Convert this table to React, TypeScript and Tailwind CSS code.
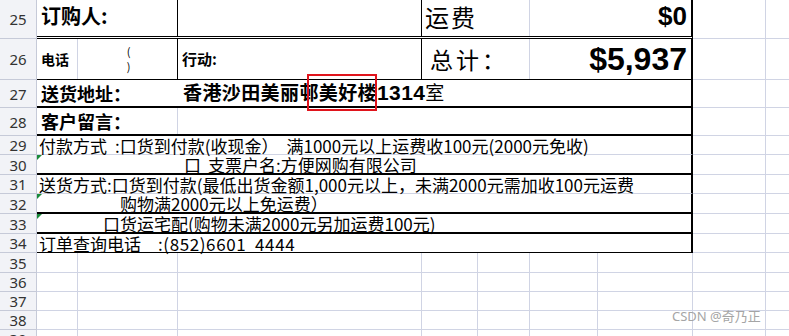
// Excel-style order form fragment (rows 25–39).
const cjk = "font-['Noto_Sans_CJK_SC',sans-serif]"
const arial = "font-['Liberation_Sans',Arial,sans-serif]"

function RowHead({ n, h }: { n: number; h: string }) {
  return (
    <div
      className={`flex w-[37px] shrink-0 items-center justify-center border-r border-b border-[#c6cad8] bg-[#f2f3f7] pt-[1px] text-[15px] text-[#333] font-['Noto_Sans',sans-serif] ${h}`}
    >
      {n}
    </div>
  )
}

function Outside() {
  return (
    <>
      <div className="w-[73px] shrink-0 border-r border-b border-[#d0d4e4]" />
      <div className="flex-1 border-b border-[#d0d4e4]" />
    </>
  )
}

function Tick() {
  return (
    <span className="absolute left-0 top-0 h-0 w-0 border-t-[5px] border-r-[5px] border-t-[#1a8a3a] border-r-transparent" />
  )
}

function EmptyRow({ n, h }: { n: number; h: string }) {
  return (
    <div className={`flex ${h}`}>
      <RowHead n={n} h={h} />
      <div className="w-[41px] shrink-0 border-r border-b border-[#d0d4e4]" />
      <div className="w-[100px] shrink-0 border-r border-b border-[#d0d4e4]" />
      <div className="w-[244px] shrink-0 border-r border-b border-[#d0d4e4]" />
      <div className="w-[56px] shrink-0 border-r border-b border-[#d0d4e4]" />
      <div className="w-[52px] shrink-0 border-r border-b border-[#d0d4e4]" />
      <div className="w-[68px] shrink-0 border-r border-b border-[#d0d4e4]" />
      <div className="w-[95px] shrink-0 border-r border-b border-[#d0d4e4]" />
      <Outside />
    </div>
  )
}

export default function App() {
  return (
    <div className={`relative h-[336px] w-[789px] overflow-hidden bg-white text-black ${cjk}`}>
      {/* 25 */}
      <div className="flex h-[39px]">
        <RowHead n={25} h="h-[39px]" />
        <div className="flex w-[656px] shrink-0 border-r-2 border-b-[3px] border-black [border-bottom-style:double]">
          <div className="flex w-[141px] shrink-0 items-center border-r border-black pl-[4px] pb-[4px] text-[20px] font-bold">
            订购人:
          </div>
          <div className="w-[244px] shrink-0 border-r border-black" />
          <div className="flex w-[108px] shrink-0 items-center border-r border-[#d0d4e4] pl-[3px] pb-[2px] text-[24px] tracking-[2px]">
            运费
          </div>
          <div className={`flex flex-1 items-center justify-end pr-[4px] pb-[3px] text-[26px] font-bold ${arial}`}>
            $0
          </div>
        </div>
        <Outside />
      </div>

      {/* 26 */}
      <div className="flex h-[41px]">
        <RowHead n={26} h="h-[41px]" />
        <div className="flex w-[656px] shrink-0 border-r-2 border-b border-black">
          <div className="flex w-[41px] shrink-0 items-center border-r border-[#d0d4e4] pl-[4px] text-[14px] font-bold">
            电话
          </div>
          <div className="flex w-[100px] shrink-0 flex-col items-center justify-center border-r border-black pl-[2px] text-[11px] leading-[15px]">
            <span>(</span>
            <span>)</span>
          </div>
          <div className="flex w-[244px] shrink-0 items-center border-r border-black pl-[4px] text-[15px] font-bold">
            行动:
          </div>
          <div className="flex w-[108px] shrink-0 items-center border-r border-[#d0d4e4] pl-[8px] text-[23px] tracking-[3px]">
            总计：
          </div>
          <div className={`flex flex-1 items-center justify-end pr-[4px] text-[32px] font-bold ${arial}`}>
            $5,937
          </div>
        </div>
        <Outside />
      </div>

      {/* 27 */}
      <div className="flex h-[28px]">
        <RowHead n={27} h="h-[28px]" />
        <div className="flex w-[656px] shrink-0 items-center border-r-2 border-b-2 border-black">
          <div className="w-[141px] shrink-0 pl-[4px] text-[18px] font-bold">送货地址：</div>
          <div className="flex items-baseline pl-[5px] text-[19px] font-bold tracking-[0.4px]">
            香港沙田美丽邨美好楼
            <span className={`text-[21px] ${arial}`}>1314</span>
            <span className="font-normal">室</span>
          </div>
        </div>
        <Outside />
      </div>

      {/* 28 */}
      <div className="flex h-[28px]">
        <RowHead n={28} h="h-[28px]" />
        <div className="flex w-[656px] shrink-0 border-r-2 border-b-2 border-black">
          <div className="flex w-[141px] shrink-0 items-center border-r border-[#d0d4e4] pl-[4px] text-[18px] font-bold">
            客户留言：
          </div>
        </div>
        <Outside />
      </div>

      {/* 29 */}
      <div className="flex h-[19px]">
        <RowHead n={29} h="h-[19px]" />
        <div className="flex w-[656px] shrink-0 items-center whitespace-pre border-r-2 border-b border-black border-b-[#d0d4e4] pl-[2px] text-[17px] leading-none">
          付款方式<span className="ml-[8px]">:</span>口货到付款(收现金）<span className="ml-[8px]">满1000元以上运费收100元(2000元免收)</span>
        </div>
        <Outside />
      </div>

      {/* 30 */}
      <div className="flex h-[20px]">
        <RowHead n={30} h="h-[20px]" />
        <div className="relative flex w-[656px] shrink-0 items-center whitespace-pre border-r-2 border-b-2 border-black pl-[147px] text-[17px] leading-none">
          <Tick />
          口<span className="ml-[7px]">支票户名:方便网购有限公司</span>
        </div>
        <Outside />
      </div>

      {/* 31 */}
      <div className="flex h-[19px]">
        <RowHead n={31} h="h-[19px]" />
        <div className="flex w-[656px] shrink-0 items-center whitespace-pre border-r-2 border-b border-black border-b-[#d0d4e4] pl-[2px] text-[17px] leading-none">
          送货方式:口货到付款(最低出货金额1,000元以上，未满2000元需加收100元运费
        </div>
        <Outside />
      </div>

      {/* 32 */}
      <div className="flex h-[20px]">
        <RowHead n={32} h="h-[20px]" />
        <div className="relative flex w-[656px] shrink-0 items-center whitespace-pre border-r-2 border-b-2 border-black pl-[83px] text-[17px] leading-none">
          <Tick />
          购物满2000元以上免运费）
        </div>
        <Outside />
      </div>

      {/* 33 */}
      <div className="flex h-[20px]">
        <RowHead n={33} h="h-[20px]" />
        <div className="relative flex w-[656px] shrink-0 items-center whitespace-pre border-r-2 border-b-2 border-black pl-[66px] text-[17px] leading-none">
          <Tick />
          口货运宅配(购物未满2000元另加运费100元)
        </div>
        <Outside />
      </div>

      {/* 34 */}
      <div className="flex h-[19px]">
        <RowHead n={34} h="h-[19px]" />
        <div className="flex w-[656px] shrink-0 items-center whitespace-pre border-r-2 border-b border-black pl-[2px] text-[17px] leading-none">
          订单查询电话<span className="ml-[17px] tracking-[0.6px]">:(852)6601  4444</span>
        </div>
        <Outside />
      </div>

      <EmptyRow n={35} h="h-[20px]" />
      <EmptyRow n={36} h="h-[19px]" />
      <EmptyRow n={37} h="h-[19px]" />
      <EmptyRow n={38} h="h-[19px]" />
      <EmptyRow n={39} h="h-[19px]" />

      {/* highlight box */}
      <div className="absolute left-[307px] top-[74px] h-[37px] w-[70px] border-2 border-[#e0141c]" />

      {/* watermark */}
      <div className="absolute left-[672px] top-[307px] text-[13px] text-[#a5a5a5] font-['Noto_Sans','Noto_Sans_CJK_SC',sans-serif]">
        CSDN @奇乃正
      </div>
    </div>
  )
}
